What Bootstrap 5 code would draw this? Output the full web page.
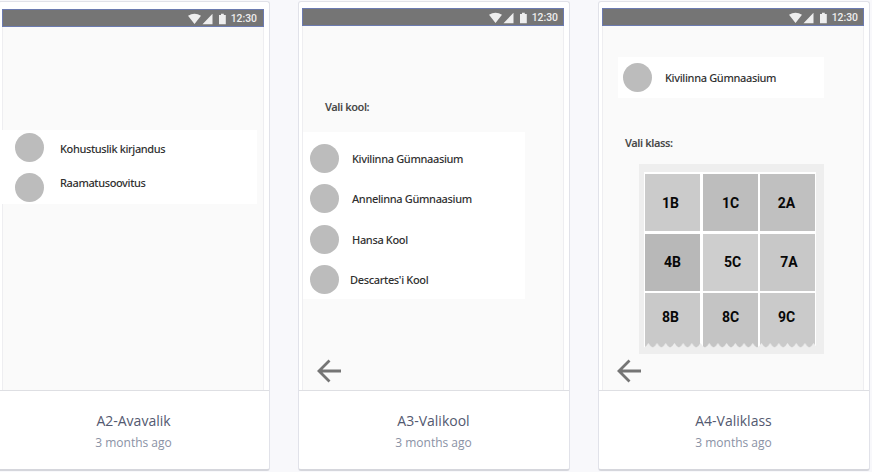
<!DOCTYPE html>
<html lang="et">
<head>
<meta charset="utf-8">
<meta name="viewport" content="width=device-width, initial-scale=1">
<title>Screens</title>
<link href="https://cdn.jsdelivr.net/npm/bootstrap@5.3.0/dist/css/bootstrap.min.css" rel="stylesheet">
<style>
body{background:#f8f8fb;font-family:"Open Sans",sans-serif;height:472px;overflow:hidden}
.board{gap:28px;margin-left:-2px;padding-top:1px}
.screen-card{width:272px;height:470px;flex:none;border:1px solid #e1e2e9;border-bottom:2px solid #d5d6dc;border-radius:3px}
.preview{height:389px;padding:6px 5px 0 3px;border-bottom:1px solid #dedfe3}
.preview.low{padding-top:7px}
.phone{background:#fafafa;border:solid #eeeef1;border-width:0 1px}
.status{height:18px;margin:0 -1px;background:#757575;border:1px solid #6c7bb0;padding:1px 5px 0 0;font:500 10.4px/15px Roboto,sans-serif;color:#eee}
.preview.low .status{padding-right:6px}
.status svg{margin-right:5px}
.white-list{background:#fff}
.dot{width:29px;height:29px;border-radius:50%;background:#bcbcbc;flex:none}
.lbl{font-family:"Noto Sans","Open Sans",sans-serif;font-weight:500;font-size:11px;line-height:16px;color:#303030;white-space:nowrap;letter-spacing:-.34px}
.head{font-weight:600;color:#484848;letter-spacing:-.42px}
.avalik{width:255px;height:74px;margin-top:103px;padding:3px 0 0 13px;margin-left:-1px}
.avalik .dot{margin-bottom:11px}
.avalik .names{padding:8px 0 0 16px}
.avalik .names .lbl{margin-bottom:18px;letter-spacing:-.38px}
.kool-head{padding:73px 0 0 22px}
.kool{width:222px;height:167px;margin-top:17px;padding:12px 0 0 7px}
.kool .item{height:40.4px;gap:13px;align-items:flex-start}
.kool .lbl{margin-top:7px}
.kool .near{margin-left:-2px}
.back{margin:60px 0 0 14px;width:24px;height:24px}
.picked{width:206px;height:41px;margin:31px 0 0 15px;padding-left:5px;gap:13px}
.klass-head{padding:37px 0 0 22px}
.sheet{width:185px;height:190px;margin:13px 0 0 36px;padding:8px 8px 0 5px;background:#eee}
.cells{display:grid;grid-template-columns:55px 55px 55px;grid-template-rows:57px 57px 55px;gap:2.5px;padding:2px 1px 0;background:#fff;font:700 14px/16px Roboto,sans-serif;color:#080808}
.cells span{display:flex;align-items:center;justify-content:center;background:#c9c9c9}
.cells .a{background:#cbcbcb;padding-right:4px}.cells .b{background:#bdbdbd;padding-left:1px}.cells .c{background:#c0c0c0;padding-right:2px}
.cells .d{background:#b8b8b8}.cells .e{background:#cecece;padding-left:5px}.cells .f{background:#c8c8c8;padding-left:3px}
.cells .g{padding:0 4px 7px 0}.cells .h{background:#c4c4c4;padding:0 0 7px 1px}.cells .i{background:#cacaca;padding:0 2px 7px 0}
.torn{display:block;margin-top:-5px}
.sheet + .back{margin-top:5px}
.meta{height:78px;font-size:14px;line-height:20px;color:#535970;padding-top:20px;padding-right:1px}
.meta small{font-size:12px;line-height:22px;color:#8a92a5;display:block;margin-top:1px}
</style>
<script src="https://cdn.jsdelivr.net/npm/bootstrap@5.3.0/dist/js/bootstrap.bundle.min.js"></script>
</head>
<body>
<svg class="d-none" xmlns="http://www.w3.org/2000/svg">
<symbol id="sig" viewBox="0 0 38 12"><path d="M0 2.800Q6.500-1.500 13 2.800L6.500 11Z M14.500 11.300H24.500V.8Z M31 2H33V.8H35.800V2H37.800V11.300H31Z" fill="#eee"/></symbol>
<symbol id="arrow" viewBox="0 0 24 24"><path d="M24 12H2M12.500 1.500 2 12l10.500 10.500" fill="none" stroke="#757575" stroke-width="2.800"/></symbol>
</svg>
<main class="board d-flex">
<section class="screen-card bg-white">
<div class="preview low"><div class="phone h-100 d-flex flex-column">
<div class="status d-flex justify-content-end align-items-center"><svg width="38" height="12"><use href="#sig"/></svg><span>12:30</span></div>
<div class="white-list avalik d-flex"><div><div class="dot"></div><div class="dot"></div></div>
<div class="names"><div class="lbl">Kohustuslik kirjandus</div><div class="lbl">Raamatusoovitus</div></div></div>
</div></div>
<div class="meta text-center">A2-Avavalik<small>3 months ago</small></div>
</section>
<section class="screen-card bg-white">
<div class="preview"><div class="phone h-100 d-flex flex-column">
<div class="status d-flex justify-content-end align-items-center"><svg width="38" height="12"><use href="#sig"/></svg><span>12:30</span></div>
<div class="kool-head lbl head">Vali kool:</div>
<div class="white-list kool">
<div class="item d-flex"><div class="dot"></div><div class="lbl">Kivilinna Gümnaasium</div></div>
<div class="item d-flex"><div class="dot"></div><div class="lbl">Annelinna Gümnaasium</div></div>
<div class="item d-flex"><div class="dot"></div><div class="lbl">Hansa Kool</div></div>
<div class="item d-flex"><div class="dot"></div><div class="lbl near">Descartes'i Kool</div></div>
</div>
<svg class="back"><use href="#arrow"/></svg>
</div></div>
<div class="meta text-center">A3-Valikool<small>3 months ago</small></div>
</section>
<section class="screen-card bg-white">
<div class="preview"><div class="phone h-100 d-flex flex-column">
<div class="status d-flex justify-content-end align-items-center"><svg width="38" height="12"><use href="#sig"/></svg><span>12:30</span></div>
<div class="white-list picked d-flex align-items-center"><div class="dot"></div><div class="lbl">Kivilinna Gümnaasium</div></div>
<div class="klass-head lbl head">Vali klass:</div>
<div class="sheet">
<div class="cells"><span class="a">1B</span><span class="b">1C</span><span class="c">2A</span><span class="d">4B</span><span class="e">5C</span><span class="f">7A</span><span class="g">8B</span><span class="h">8C</span><span class="i">9C</span></div>
<svg class="torn" width="172" height="6"><defs><pattern id="teeth" width="8.700" height="6" patternUnits="userSpaceOnUse"><path d="M0 6V4.500Q2 4 4.350 0Q6.700 4 8.700 4.500V6Z" fill="#eee"/></pattern></defs><rect width="172" height="6" fill="url(#teeth)"/></svg>
</div>
<svg class="back"><use href="#arrow"/></svg>
</div></div>
<div class="meta text-center">A4-Valiklass<small>3 months ago</small></div>
</section>
</main>
</body>
</html>
